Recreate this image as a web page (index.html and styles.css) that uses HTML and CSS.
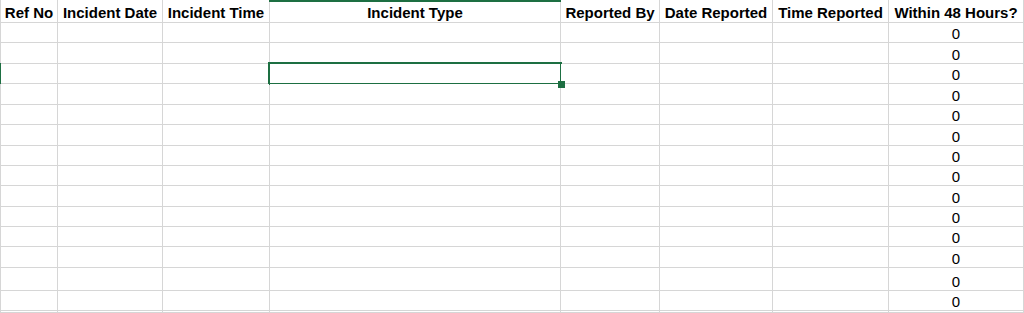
FILE: index.html
```html
<!DOCTYPE html>
<html>
<head>
<meta charset="utf-8">
<link rel="stylesheet" href="styles.css">
</head>
<body>
<div class="sheet">
  <div class="row head">
    <div class="c">Ref No</div><div class="c">Incident Date</div><div class="c">Incident Time</div><div class="c col-active">Incident Type</div><div class="c">Reported By</div><div class="c">Date Reported</div><div class="c">Time Reported</div><div class="c">Within 48 Hours?</div>
  </div>
  <div class="row"><div class="c"></div><div class="c"></div><div class="c"></div><div class="c"></div><div class="c"></div><div class="c"></div><div class="c"></div><div class="c num">0</div></div>
  <div class="row"><div class="c"></div><div class="c"></div><div class="c"></div><div class="c"></div><div class="c"></div><div class="c"></div><div class="c"></div><div class="c num">0</div></div>
  <div class="row"><div class="c row-active"></div><div class="c"></div><div class="c"></div><div class="c selected"><span class="handle"></span></div><div class="c"></div><div class="c"></div><div class="c"></div><div class="c num">0</div></div>
  <div class="row"><div class="c"></div><div class="c"></div><div class="c"></div><div class="c"></div><div class="c"></div><div class="c"></div><div class="c"></div><div class="c num">0</div></div>
  <div class="row"><div class="c"></div><div class="c"></div><div class="c"></div><div class="c"></div><div class="c"></div><div class="c"></div><div class="c"></div><div class="c num">0</div></div>
  <div class="row"><div class="c"></div><div class="c"></div><div class="c"></div><div class="c"></div><div class="c"></div><div class="c"></div><div class="c"></div><div class="c num">0</div></div>
  <div class="row"><div class="c"></div><div class="c"></div><div class="c"></div><div class="c"></div><div class="c"></div><div class="c"></div><div class="c"></div><div class="c num">0</div></div>
  <div class="row"><div class="c"></div><div class="c"></div><div class="c"></div><div class="c"></div><div class="c"></div><div class="c"></div><div class="c"></div><div class="c num">0</div></div>
  <div class="row"><div class="c"></div><div class="c"></div><div class="c"></div><div class="c"></div><div class="c"></div><div class="c"></div><div class="c"></div><div class="c num">0</div></div>
  <div class="row"><div class="c"></div><div class="c"></div><div class="c"></div><div class="c"></div><div class="c"></div><div class="c"></div><div class="c"></div><div class="c num">0</div></div>
  <div class="row"><div class="c"></div><div class="c"></div><div class="c"></div><div class="c"></div><div class="c"></div><div class="c"></div><div class="c"></div><div class="c num">0</div></div>
  <div class="row"><div class="c"></div><div class="c"></div><div class="c"></div><div class="c"></div><div class="c"></div><div class="c"></div><div class="c"></div><div class="c num">0</div></div>
  <div class="row"><div class="c"></div><div class="c"></div><div class="c"></div><div class="c"></div><div class="c"></div><div class="c"></div><div class="c"></div><div class="c num">0</div></div>
  <div class="row"><div class="c"></div><div class="c"></div><div class="c"></div><div class="c"></div><div class="c"></div><div class="c"></div><div class="c"></div><div class="c num">0</div></div>
  <div class="row"><div class="c"></div><div class="c"></div><div class="c"></div><div class="c"></div><div class="c"></div><div class="c"></div><div class="c"></div><div class="c"></div></div>
</div>
</body>
</html>
```

FILE: styles.css
```css
html, body {
  margin: 0;
  padding: 0;
  background: #ffffff;
  overflow: hidden;
}

body {
  width: 1024px;
  height: 313px;
  font-family: "Liberation Sans", Arial, Helvetica, sans-serif;
  color: #000;
}

.sheet {
  display: grid;
  grid-template-columns: 56px 104px 106px 290px 98px 112px 115px 134px;
  grid-template-rows: 22px 19px 20px 19px 20px 19px 20px 19px 19px 20px 19px 19px 20px 22px 19px 1px;
  gap: 1px;
  padding: 0 1px;
  background: #d6d6d6;
  width: 1022px;
  height: 313px;
}

.row {
  display: contents;
}

.c {
  background: #ffffff;
  display: flex;
  align-items: flex-end;
  justify-content: center;
  font-size: 15px;
  line-height: 17px;
  white-space: nowrap;
  position: relative;
  overflow: visible;
  min-height: 0;
}

.head .c {
  font-weight: bold;
  padding-bottom: 1px;
}

.num {
  font-size: 15px;
}

.col-active::before {
  content: "";
  position: absolute;
  left: -1px;
  right: -1px;
  top: 0;
  height: 2px;
  background: #1d6f42;
}

.row-active::before {
  content: "";
  position: absolute;
  left: -1px;
  top: -1px;
  bottom: -1px;
  width: 1px;
  background: #1d6f42;
}

.selected::after {
  content: "";
  position: absolute;
  left: -2px;
  right: -2px;
  top: -2px;
  bottom: -2px;
  border: 2px solid #1d6f42;
}

.handle {
  position: absolute;
  right: -5px;
  bottom: -5px;
  width: 7px;
  height: 7px;
  background: #1d6f42;
  z-index: 1;
}
```
